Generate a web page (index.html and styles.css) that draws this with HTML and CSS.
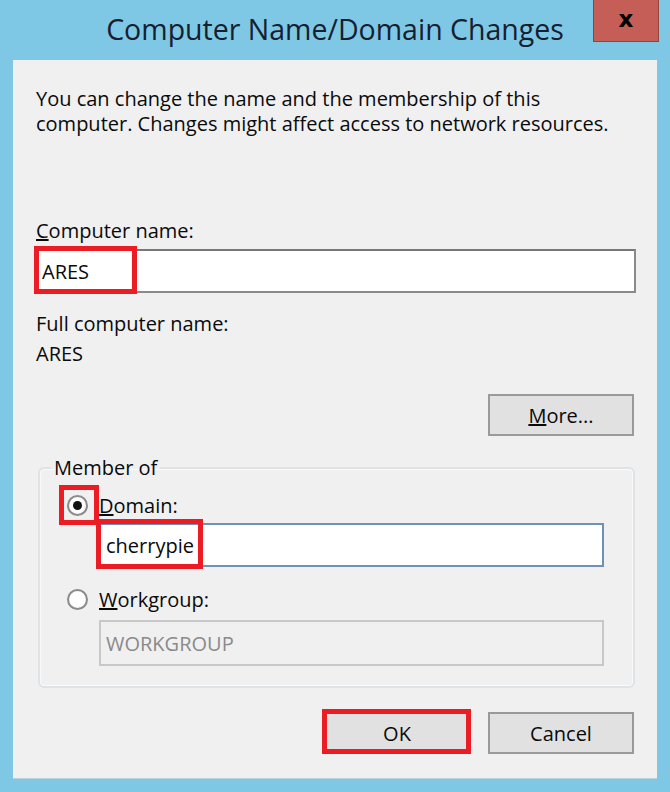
FILE: index.html
```html
<!DOCTYPE html>
<html lang="en">
<head>
  <meta charset="UTF-8" />
  <title>Computer Name/Domain Changes</title>
  <link rel="stylesheet" href="styles.css">
</head>
<body>
  <div class="window">
    <div class="titlebar">
      <span class="title">Computer Name/Domain Changes</span>
      <div class="close">x</div>
    </div>

    <div class="client">
      <p class="intro">You can change the name and the membership of this<br>computer. Changes might affect access to network resources.</p>

      <div class="label name-label"><u>C</u>omputer name:</div>
      <div class="textbox name-box">
        ARES
        <span class="mark mark-name"></span>
      </div>

      <div class="label full-label">Full computer name:</div>
      <div class="label full-value">ARES</div>

      <div class="more-row">
        <div class="btn"><u>M</u>ore...</div>
      </div>

      <fieldset class="group">
        <legend>Member of</legend>
        <div class="option domain-option">
          <span class="radio checked"><span class="mark mark-radio"></span></span>
          <span><u>D</u>omain:</span>
        </div>
        <div class="textbox focused">
          cherrypie
          <span class="mark mark-domain"></span>
        </div>
        <div class="option work-option">
          <span class="radio"></span>
          <span><u>W</u>orkgroup:</span>
        </div>
        <div class="textbox disabled">WORKGROUP</div>
      </fieldset>

      <div class="buttons">
        <div class="btn ok">OK<span class="mark mark-ok"></span></div>
        <div class="btn">Cancel</div>
      </div>
    </div>
  </div>
</body>
</html>
```

FILE: styles.css
```css
* {
  margin: 0;
  padding: 0;
  box-sizing: border-box;
}

body {
  background-color: #7ec8e6;
  font-family: "Open Sans", "Noto Sans", sans-serif;
  font-size: 20px;
  color: #0a0a0a;
}

.window {
  width: 670px;
  height: 792px;
  background-color: #7ec8e6;
  display: flex;
  flex-direction: column;
}

.titlebar {
  position: relative;
  height: 60px;
  display: flex;
  justify-content: center;
  align-items: center;
}

.title {
  font-size: 28.5px;
  color: #16202e;
  margin-top: -3px;
}

.close {
  position: absolute;
  top: 0;
  right: 11px;
  width: 66px;
  height: 42px;
  background-color: #c45e56;
  border: 1px solid #8e4540;
  border-top: none;
  color: #000;
  font-family: "DejaVu Sans", sans-serif;
  font-weight: bold;
  font-size: 23px;
  display: flex;
  justify-content: center;
  align-items: center;
  padding-bottom: 4px;
}

.client {
  flex: 1;
  margin: 0 13px 14px;
  background-color: #f0f0f0;
  padding: 26px 22px 0;
  box-shadow: 0 1px 0 #b9d2dc;
}

.intro {
  line-height: 25px;
  padding-left: 1px;
}

.label {
  line-height: 25px;
  padding-left: 1px;
}

.name-label {
  margin-top: 82px;
}

.textbox {
  position: relative;
  height: 44px;
  background-color: #fff;
  border: 2px solid #8a8a8a;
  border-top-color: #777;
  padding-left: 5px;
  display: flex;
  align-items: center;
  margin-top: 6px;
}

.name-box {
  margin-right: -1px;
}

.textbox.focused {
  border-color: #6f91b6;
  margin-top: 5px;
}

.textbox.disabled {
  background-color: #f0f0f0;
  border-color: #c8c8c8;
  color: #8a8a8a;
  height: 46px;
  margin-top: 8px;
}

.full-label {
  margin-top: 18px;
}

.full-value {
  margin-top: 5px;
}

.more-row,
.buttons {
  display: flex;
  justify-content: flex-end;
  gap: 18px;
  padding-right: 1px;
}

.more-row {
  margin-top: 28px;
}

.btn {
  position: relative;
  width: 146px;
  height: 42px;
  background-color: #e1e1e1;
  border: 2px solid #9a9a9a;
  display: flex;
  justify-content: center;
  align-items: center;
}

.group {
  margin: 19px 0 0 3px;
  border: 2px solid #dfe3e6;
  border-radius: 6px;
  padding: 0 29px 20px 27px;
  box-shadow: inset 0 0 0 1px #fafafa;
}

.group legend {
  margin-left: -16px;
  padding: 0 3px;
  line-height: 25px;
}

.option {
  display: flex;
  align-items: center;
  height: 25px;
  gap: 11px;
}

.domain-option {
  margin-top: 13px;
}

.work-option {
  margin-top: 20px;
}

.option + .textbox {
  margin-left: 32px;
}

.radio {
  position: relative;
  width: 21px;
  height: 21px;
  border-radius: 50%;
  border: 2px solid #8b8b8b;
  background: radial-gradient(circle, #fff 55%, #e6e6e6 100%);
  display: flex;
  justify-content: center;
  align-items: center;
}

.radio.checked::before {
  content: "";
  width: 9px;
  height: 9px;
  border-radius: 50%;
  background-color: #111;
}

.buttons {
  margin-top: 24px;
}

/* red annotation boxes */
.mark {
  position: absolute;
  border: 5px solid #ec1c24;
}

.mark-name {
  left: -3px;
  top: -5px;
  width: 103px;
  height: 48px;
}

.mark-radio {
  left: -10px;
  top: -12px;
  width: 40px;
  height: 40px;
}

.mark-domain {
  left: -5px;
  top: -6px;
  width: 107px;
  height: 50px;
}

.mark-ok {
  left: -4px;
  top: -5px;
  right: -3px;
  bottom: -2px;
}
```
